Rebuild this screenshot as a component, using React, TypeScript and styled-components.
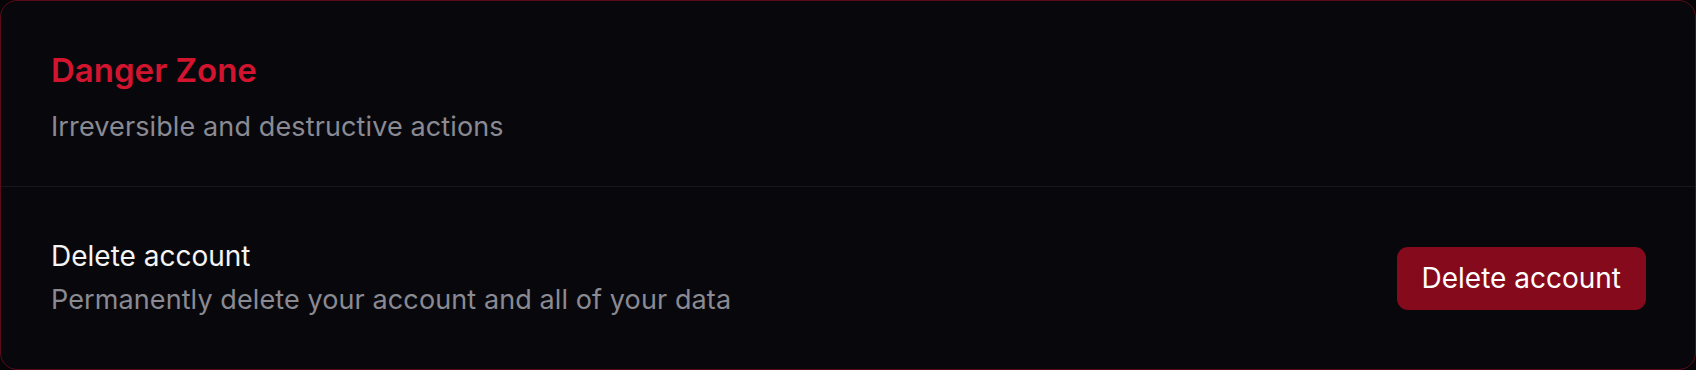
import styled, { createGlobalStyle } from 'styled-components';

const GlobalStyle = createGlobalStyle`
  html, body {
    margin: 0;
    padding: 0;
    background: #050507;
  }
  body {
    font-family: Inter, "Noto Sans", "Liberation Sans", sans-serif;
    -webkit-font-smoothing: antialiased;
  }
  * {
    box-sizing: border-box;
  }
`;

const Card = styled.section`
  width: 1696px;
  height: 370px;
  display: flex;
  flex-direction: column;
  background-color: #08080c;
  border: 1px solid #5a0b19;
  border-radius: 17px;
  overflow: hidden;
`;

const Header = styled.header`
  display: flex;
  flex-direction: column;
  gap: 20px;
  padding: 50px 50px 41px;
  border-bottom: 1px solid #16161c;
`;

const Title = styled.h2`
  margin: 0;
  color: #d3142f;
  font-size: 33px;
  font-weight: 600;
  line-height: 38px;
`;

const Subtitle = styled.p`
  margin: 0;
  color: #8a8a93;
  font-size: 27px;
  line-height: 36px;
  letter-spacing: 0.12px;
`;

const Row = styled.div`
  flex: 1;
  display: flex;
  align-items: center;
  justify-content: space-between;
  padding: 0 49px 0 50px;
`;

const RowText = styled.div`
  display: flex;
  flex-direction: column;
  gap: 8px;
`;

const RowTitle = styled.div`
  color: #f4f4f5;
  font-size: 28px;
  font-weight: 400;
  line-height: 36px;
`;

const RowDescription = styled.div`
  color: #8a8a93;
  font-size: 27px;
  line-height: 36px;
  letter-spacing: 0.1px;
`;

const DangerButton = styled.button`
  height: 63px;
  padding: 0 25px;
  border: none;
  border-radius: 11px;
  background-color: #850a1c;
  color: #ffffff;
  font-family: inherit;
  font-size: 28px;
  font-weight: 400;
  cursor: pointer;
`;

export default function App() {
  return (
    <>
      <GlobalStyle />
      <Card>
        <Header>
          <Title>Danger Zone</Title>
          <Subtitle>Irreversible and destructive actions</Subtitle>
        </Header>
        <Row>
          <RowText>
            <RowTitle>Delete account</RowTitle>
            <RowDescription>Permanently delete your account and all of your data</RowDescription>
          </RowText>
          <DangerButton>Delete account</DangerButton>
        </Row>
      </Card>
    </>
  );
}
